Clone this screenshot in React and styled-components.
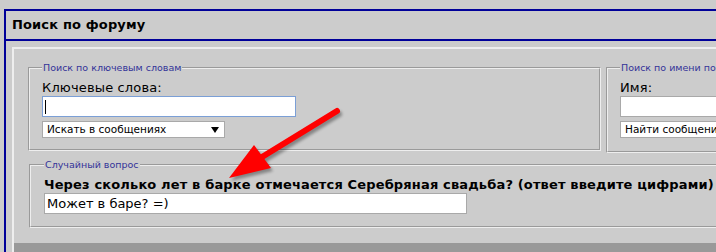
import React from 'react'
import styled, { createGlobalStyle } from 'styled-components'

const GlobalStyle = createGlobalStyle`
  html, body {
    margin: 0;
    padding: 0;
    background: #cccccc;
    overflow: hidden;
  }
  body {
    font-family: "DejaVu Sans", Verdana, sans-serif;
    color: #000;
  }
`

export default function App() {
  return (
    <Page>
      <GlobalStyle />
      <Panel>
        <TitleBar>Поиск по форуму</TitleBar>
        <Content>
          <Row>
            <Group width="573px">
              <Legend>Поиск по ключевым словам</Legend>
              <Label>Ключевые слова:</Label>
              <Field width="254px" focused>
                <Caret />
              </Field>
              <Select width="183px">
                Искать в сообщениях
                <Arrow />
              </Select>
            </Group>
            <Group width="300px" tall>
              <Legend>Поиск по имени пользователя</Legend>
              <Label>Имя:</Label>
              <Field width="260px" />
              <Select width="200px">Найти сообщения пользователя</Select>
            </Group>
          </Row>
          <QuestionGroup>
            <Legend>Случайный вопрос</Legend>
            <Question>Через сколько лет в барке отмечается Серебряная свадьба? (ответ введите цифрами)</Question>
            <Field width="423px">Может в баре? =)</Field>
          </QuestionGroup>
          <FooterBar />
        </Content>
      </Panel>
      <Overlay width="716" height="252" viewBox="0 0 716 252">
        <defs>
          <filter id="blur" x="-20%" y="-20%" width="140%" height="140%">
            <feGaussianBlur stdDeviation="1.5" />
          </filter>
        </defs>
        <g fill="#000" stroke="#000" opacity="0.35" filter="url(#blur)" transform="translate(2 3)">
          <line x1="337" y1="111" x2="262" y2="157" strokeWidth="6" strokeLinecap="round" />
          <polygon points="229,178 254,145 271,168" stroke="none" />
        </g>
        <g fill="#ff0000" stroke="#ff0000">
          <line x1="337" y1="111" x2="262" y2="157" strokeWidth="6" strokeLinecap="round" />
          <polygon points="229,178 254,145 271,168" stroke="none" />
        </g>
      </Overlay>
    </Page>
  )
}

const Page = styled.div`
  position: relative;
  width: 716px;
  height: 252px;
  overflow: hidden;
  padding-top: 9px;
  box-sizing: border-box;
`
const Panel = styled.div`
  margin-left: 4px;
  width: 760px;
  border-top: 2px solid #000099;
  border-left: 2px solid #000099;
  height: 260px;
`
const TitleBar = styled.div`
  height: 28px;
  line-height: 28px;
  padding-left: 6px;
  font-size: 13px;
  font-weight: bold;
  letter-spacing: 0.15px;
  border-bottom: 2px solid #000099;
`
const Content = styled.div`
  margin: 6px 0 0 6px;
  border-top: 2px solid #eeeeee;
  border-left: 2px solid #eeeeee;
  padding: 12px 0 0 14px;
`
const Row = styled.div`
  display: flex;
  gap: 5px;
  align-items: flex-start;
`
const Group = styled.fieldset`
  margin: 0;
  width: ${({ width }) => width};
  box-sizing: border-box;
  height: ${({ tall }) => (tall ? '92px' : '90px')};
  padding: 0 12px;
  border: 2px groove #eeeeee;
  flex-shrink: 0;
`
const QuestionGroup = styled.fieldset`
  margin: 5px 0 0 1px;
  width: 700px;
  box-sizing: border-box;
  height: 70px;
  padding: 0 12px 0 13px;
  border: 2px groove #eeeeee;
`
const Legend = styled.legend`
  padding: 0 1px;
  font-size: 9.5px;
  line-height: 13px;
  color: #333399;
  white-space: nowrap;
`
const Label = styled.div`
  font-size: 13px;
  margin-top: 6px;
  line-height: 16px;
  letter-spacing: 0.15px;
`
const Field = styled.div`
  position: relative;
  width: ${({ width }) => width};
  height: 21px;
  box-sizing: border-box;
  background: #fff;
  border: 1px solid ${({ focused }) => (focused ? '#7b9fd6' : '#a9a9a9')};
  font-size: 13px;
  line-height: 19px;
  padding-left: 2px;
`
const Caret = styled.span`
  position: absolute;
  left: 2px;
  top: 3px;
  width: 1px;
  height: 14px;
  background: #000;
`
const Select = styled.div`
  position: relative;
  width: ${({ width }) => width};
  height: 17px;
  margin-top: 4px;
  box-sizing: border-box;
  background: #fff;
  border: 1px solid #a9a9a9;
  font-size: 10.5px;
  line-height: 15px;
  padding-left: 4px;
  white-space: nowrap;
  overflow: hidden;
`
const Arrow = styled.span`
  position: absolute;
  right: 5px;
  top: 5px;
  border-left: 4px solid transparent;
  border-right: 4px solid transparent;
  border-top: 6px solid #000;
`
const Question = styled.div`
  font-size: 13px;
  font-weight: bold;
  line-height: 16px;
  margin-top: 6px;
  letter-spacing: 0.15px;
  white-space: nowrap;
`
const FooterBar = styled.div`
  height: 12px;
  margin: 15px 0 0 -14px;
  background: #999999;
`
const Overlay = styled.svg`
  position: absolute;
  left: 0;
  top: 0;
  pointer-events: none;
`
